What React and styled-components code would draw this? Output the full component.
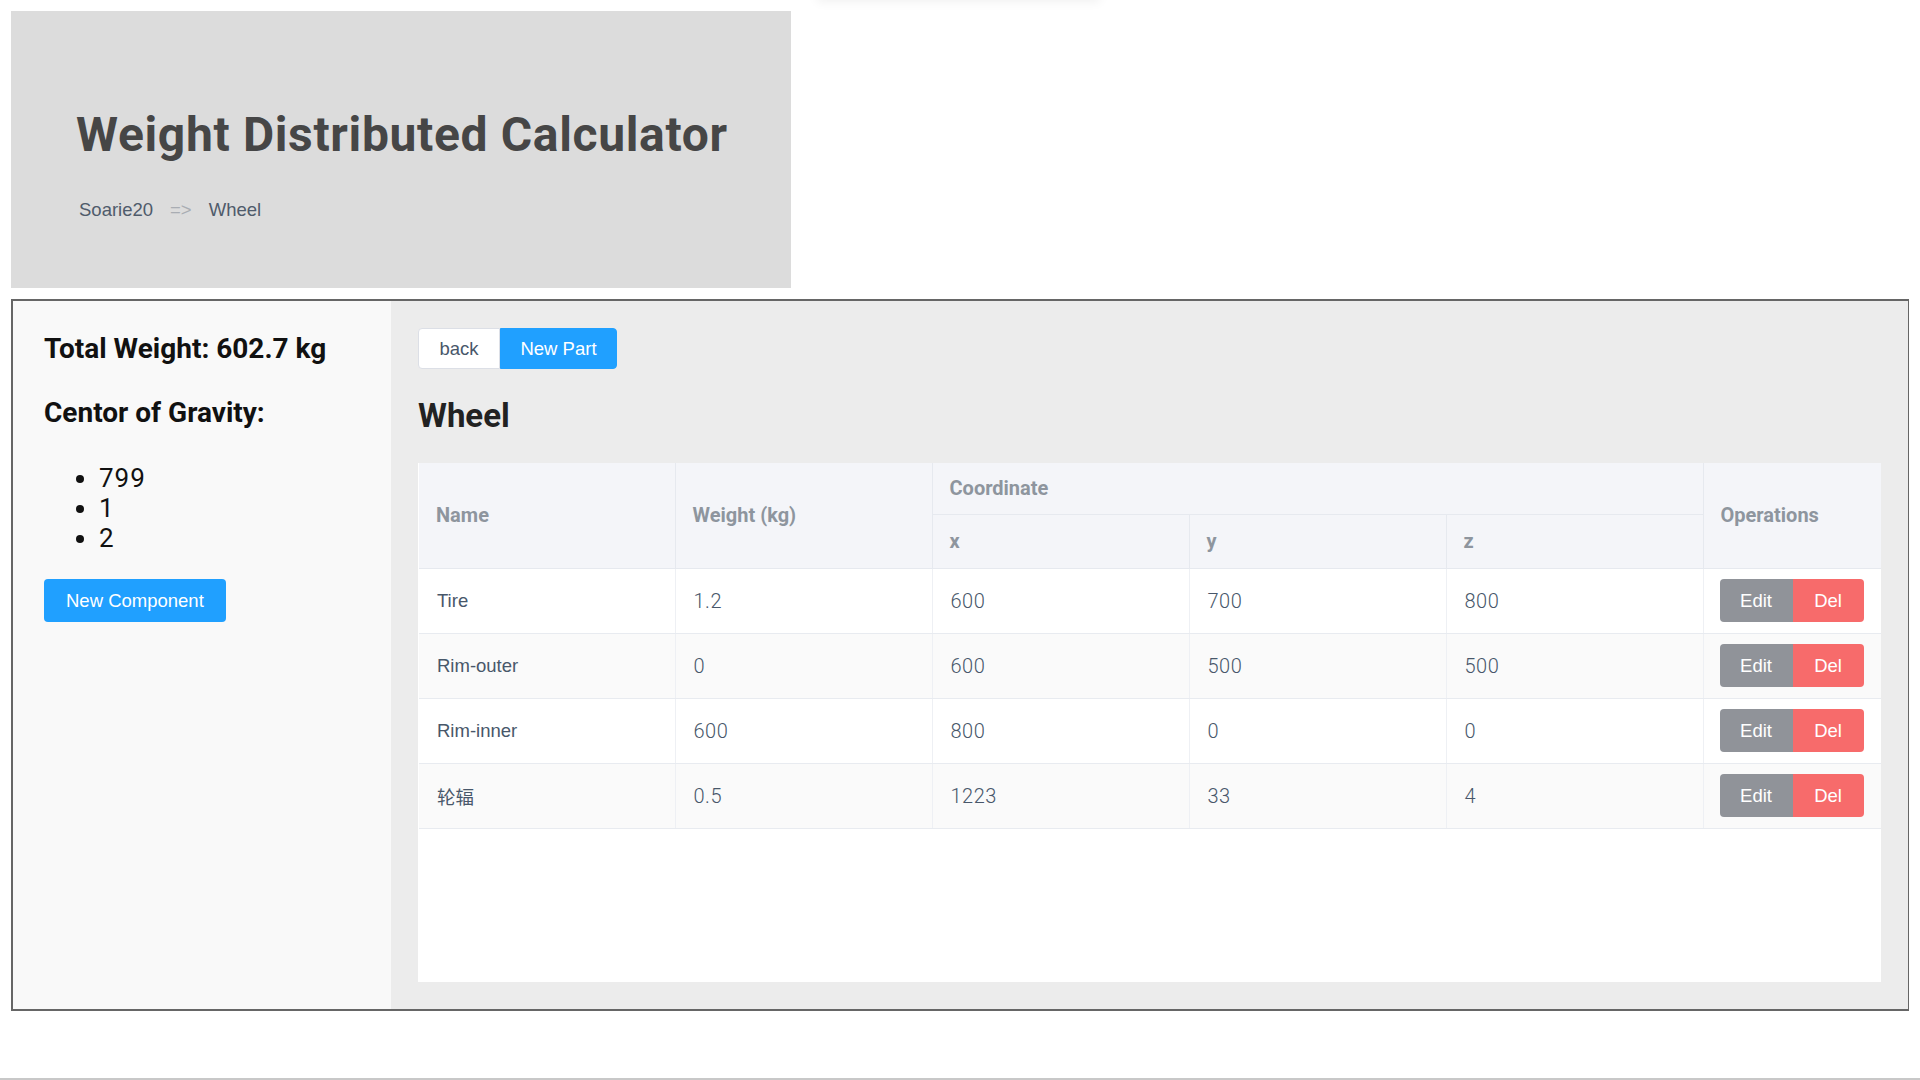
import React from 'react'
import styled, { createGlobalStyle } from 'styled-components'

const parts = [
  { name: 'Tire', weight: '1.2', x: '600', y: '700', z: '800' },
  { name: 'Rim-outer', weight: '0', x: '600', y: '500', z: '500' },
  { name: 'Rim-inner', weight: '600', x: '800', y: '0', z: '0' },
  { name: '轮辐', weight: '0.5', x: '1223', y: '33', z: '4' },
]

export default function App() {
  return (
    <>
      <GlobalStyle />
      <Page>
        <HiddenPopover />
        <Banner>
          <Title>Weight Distributed Calculator</Title>
          <Crumbs>
            <span>Soarie20</span>
            <CrumbSep>=&gt;</CrumbSep>
            <span>Wheel</span>
          </Crumbs>
        </Banner>
        <Panel>
          <Sidebar>
            <SideHeading>Total Weight: 602.7 kg</SideHeading>
            <SideHeading $spaced>Centor of Gravity:</SideHeading>
            <GravityList>
              <li>799</li>
              <li>1</li>
              <li>2</li>
            </GravityList>
            <PrimaryButton>New Component</PrimaryButton>
          </Sidebar>
          <Content>
            <ButtonGroup>
              <GroupButton>back</GroupButton>
              <GroupButton $primary>New Part</GroupButton>
            </ButtonGroup>
            <PartTitle>Wheel</PartTitle>
            <TableCard>
              <PartsTable>
                <colgroup>
                  <col style={{ width: 256 }} />
                  <col style={{ width: 257 }} />
                  <col style={{ width: 257 }} />
                  <col style={{ width: 257 }} />
                  <col style={{ width: 257 }} />
                  <col style={{ width: 178 }} />
                </colgroup>
                <thead>
                  <HeadRow $height={51}>
                    <Th rowSpan={2}>Name</Th>
                    <Th rowSpan={2}>Weight (kg)</Th>
                    <Th colSpan={3}>Coordinate</Th>
                    <Th rowSpan={2} $last>
                      Operations
                    </Th>
                  </HeadRow>
                  <HeadRow $height={54}>
                    <Th>x</Th>
                    <Th>y</Th>
                    <Th>z</Th>
                  </HeadRow>
                </thead>
                <tbody>
                  {parts.map((p, i) => (
                    <BodyRow key={p.name} $striped={i % 2 === 1}>
                      <Td>{p.name}</Td>
                      <Td $numeric>{p.weight}</Td>
                      <Td $numeric>{p.x}</Td>
                      <Td $numeric>{p.y}</Td>
                      <Td $numeric>{p.z}</Td>
                      <Td $last>
                        <OpGroup>
                          <OpButton $tone="info">Edit</OpButton>
                          <OpButton $tone="danger">Del</OpButton>
                        </OpGroup>
                      </Td>
                    </BodyRow>
                  ))}
                </tbody>
              </PartsTable>
            </TableCard>
          </Content>
        </Panel>
        <Footer />
      </Page>
    </>
  )
}

const GlobalStyle = createGlobalStyle`
  html, body {
    margin: 0;
    background: #fff;
    font-family: Roboto, 'Noto Sans CJK SC', sans-serif;
  }
`

const Page = styled.div`
  position: relative;
  padding: 11px 11px 0 11px;
`

// faint shadow of a popover sitting just above the viewport
const HiddenPopover = styled.div`
  position: absolute;
  top: -40px;
  left: 817px;
  width: 283px;
  height: 40px;
  background: #fff;
  box-shadow: 0 2px 10px rgba(0, 0, 0, 0.06);
`

const Banner = styled.header`
  box-sizing: border-box;
  width: 780px;
  height: 277px;
  padding: 96px 0 0 65px;
  background: #dcdcdc;
`

const Title = styled.h1`
  margin: 0;
  font: 700 48px/56px Roboto, sans-serif;
  letter-spacing: 0.65px;
  color: #464646;
`

const Crumbs = styled.div`
  display: flex;
  margin-top: 36px;
  padding-left: 3px;
  font: 18.5px/22px 'Liberation Sans', Arial, sans-serif;
  color: #4f5b6b;
`

const CrumbSep = styled.span`
  margin: 0 17px;
  color: #a9adb3;
`

const Panel = styled.main`
  display: flex;
  margin-top: 11px;
  border: 2px solid #666;
`

const Sidebar = styled.aside`
  box-sizing: border-box;
  width: 378px;
  flex-shrink: 0;
  padding: 31px 0 0 31px;
  background: #f9f9f9;
`

const SideHeading = styled.h2`
  margin: ${(p) => (p.$spaced ? '30px' : '0')} 0 0;
  font: 700 28px/34px Roboto, sans-serif;
  color: #111;
`

const GravityList = styled.ul`
  margin: 33px 0 0;
  padding-left: 55px;
  font: 400 26px/30px Roboto, sans-serif;
  letter-spacing: 1px;
  color: #111;
`

const PrimaryButton = styled.button`
  margin-top: 26px;
  height: 43px;
  padding: 0 22px;
  border: none;
  border-radius: 4px;
  background: #20a0ff;
  color: #fff;
  font: 18.5px 'Liberation Sans', Arial, sans-serif;
`

const Content = styled.section`
  flex: 1;
  padding: 27px;
  background: #ececec;
`

const ButtonGroup = styled.div`
  display: flex;
`

const GroupButton = styled.button`
  box-sizing: border-box;
  height: 41px;
  width: ${(p) => (p.$primary ? '117px' : '82px')};
  padding: 0;
  border: 1px solid ${(p) => (p.$primary ? '#20a0ff' : '#dcdfe6')};
  border-radius: ${(p) => (p.$primary ? '0 4px 4px 0' : '4px 0 0 4px')};
  background: ${(p) => (p.$primary ? '#20a0ff' : '#fff')};
  color: ${(p) => (p.$primary ? '#fff' : '#48576a')};
  font: 18.5px 'Liberation Sans', Arial, sans-serif;
`

const PartTitle = styled.h2`
  margin: 27px 0 27px;
  font: 700 33px/40px Roboto, sans-serif;
  color: #222;
`

const TableCard = styled.div`
  height: 519px;
  padding-left: 1px;
  background: #fff;
`

const PartsTable = styled.table`
  width: 1462px;
  border-collapse: collapse;
  table-layout: fixed;
`

const HeadRow = styled.tr`
  height: ${(p) => p.$height}px;
`

const Th = styled.th`
  padding: 0 17px;
  background: #f4f5f9;
  border-bottom: 1px solid #e6e9ef;
  border-right: ${(p) => (p.$last ? 'none' : '1px solid #e6e9ef')};
  text-align: left;
  font: 700 20px Roboto, sans-serif;
  color: #8e959e;
`

const BodyRow = styled.tr`
  height: 65px;
  background: ${(p) => (p.$striped ? '#fafafa' : '#fff')};
`

const Td = styled.td`
  padding: 0 ${(p) => (p.$last ? '16px' : '18px')};
  border-bottom: 1px solid #e8ebf0;
  border-right: ${(p) => (p.$last ? 'none' : '1px solid #eef0f4')};
  font: ${(p) =>
    p.$numeric
      ? '300 20px Roboto, sans-serif'
      : "18.5px 'Liberation Sans', Arial, 'Noto Sans CJK SC', sans-serif"};
  letter-spacing: ${(p) => (p.$numeric ? '0.5px' : '0')};
  color: #48576a;
`

const OpGroup = styled.div`
  display: flex;
`

const OpButton = styled.button`
  height: 43px;
  width: ${(p) => (p.$tone === 'info' ? '73px' : '71px')};
  padding: 0;
  border: none;
  border-radius: ${(p) => (p.$tone === 'info' ? '4px 0 0 4px' : '0 4px 4px 0')};
  background: ${(p) => (p.$tone === 'info' ? '#909399' : '#f76b6b')};
  color: #fff;
  font: 18.5px 'Liberation Sans', Arial, sans-serif;
`

const Footer = styled.div`
  margin: 67px -11px 0;
  border-top: 2px solid #c8c8c8;
  height: 20px;
`
